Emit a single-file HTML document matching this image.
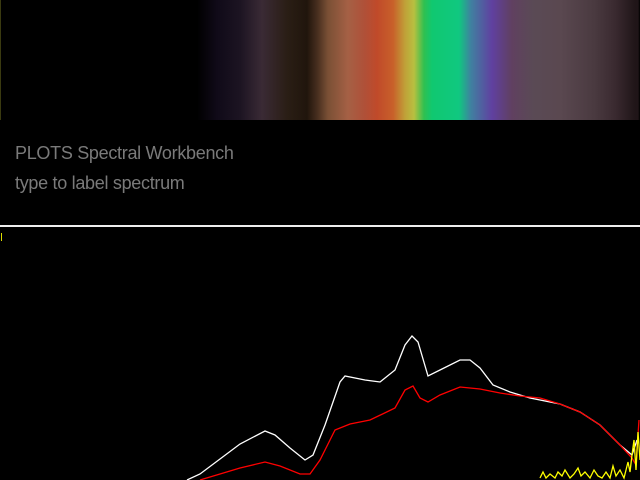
<!DOCTYPE html>
<html><head><style>
html,body{margin:0;padding:0;background:#000;width:640px;height:480px;overflow:hidden;font-family:"Liberation Sans",sans-serif}
#band{position:absolute;left:0;top:0;width:640px;height:120px;background:linear-gradient(90deg,#000 0px,#000 197px,#100a18 217px,#1c1422 240px,#3a2a35 262px,#2a1e15 287px,#20150c 307px,#4a3020 318px,#7a5035 328px,#a56045 348px,#b05038 365px,#c04a2a 377px,#c8602a 393px,#c0a038 405px,#b8c040 414px,#30c050 424px,#10c870 432px,#10c880 459px,#4080a0 471px,#6040a0 492px,#604060 512px,#5a4a55 533px,#5a4850 560px,#4a3a40 594px,#3a2a30 615px,#201518 635px,#201518 638px,#000 640px)}
.t{position:absolute;left:15px;color:#7a7a7a;font-size:18px;letter-spacing:-0.3px}
#line{position:absolute;left:0;top:225px;width:640px;height:2px;background:#eee}
</style></head><body>
<div id="band"></div>
<div style="position:absolute;left:0;top:0;width:1px;height:120px;background:#3a3a10"></div>
<div class="t" style="top:143px">PLOTS Spectral Workbench</div>
<div class="t" style="top:173px">type to label spectrum</div>
<div id="line"></div>
<div style="position:absolute;left:1px;top:233px;width:1px;height:8px;background:#dd0"></div>
<svg style="position:absolute;left:0;top:0" width="640" height="480">
<polyline fill="none" stroke="#fff" stroke-width="1.3" points="187,480 200,474 220,459 240,444 265,431 275,435 290,448 305,460 313,455 325,425 340,382 345,376 365,380 380,382 395,370 405,345 412,336 418,342 428,376 440,370 460,360 470,360 480,368 493,385 510,392 530,398 560,404 580,412 600,425 620,445 632,455 637,440"/>
<polyline fill="none" stroke="#f00" stroke-width="1.3" points="200,480 220,474 240,468 265,462 280,466 300,474 310,474 320,460 335,430 350,424 370,420 395,408 405,390 413,386 420,398 428,402 440,395 460,387 480,389 500,393 520,396 540,398 560,404 580,412 600,425 620,445 632,458 636,465 639,420"/>
<polyline fill="none" stroke="#ff0" stroke-width="1.3" points="540,478 543,472 546,478 550,474 555,478 558,472 562,476 565,470 570,478 574,474 578,468 581,476 585,472 590,478 594,470 598,476 602,478 606,472 610,478 613,466 616,476 620,470 624,478 628,462 630,472 632,455 634,440 636,470 638,432 640,460"/>
</svg>
</body></html>
